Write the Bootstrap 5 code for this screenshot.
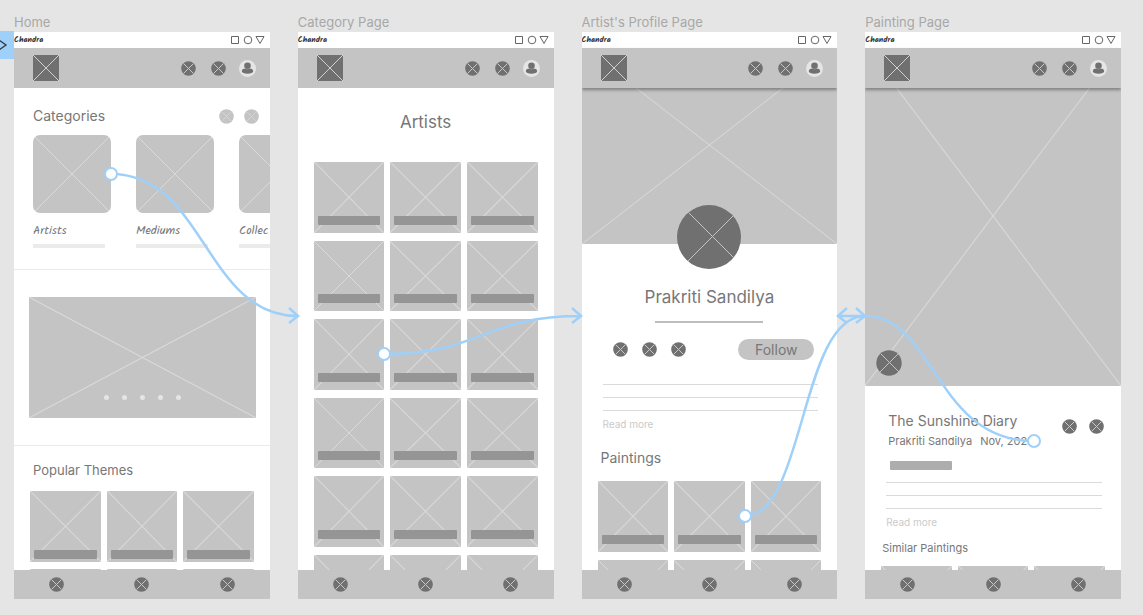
<!DOCTYPE html>
<html lang="en">
<head>
<meta charset="utf-8">
<meta name="viewport" content="width=device-width, initial-scale=1">
<title>Art app wireflow</title>
<link href="https://cdn.jsdelivr.net/npm/bootstrap@5.3.0/dist/css/bootstrap.min.css" rel="stylesheet">
<style>
  :root { --fill: #c4c4c4; --dark: #707070; --ink: #777; --flow: #9fd0f9; }
  body { background: #e5e5e5; color: var(--ink); font-family: Inter, "Liberation Sans", sans-serif; font-size: 14px; }
  .canvas { height: 100vh; padding: 13px 22px 16px 14px; display: grid; grid-template-columns: repeat(4, minmax(0, 1fr)); gap: 28px; overflow: hidden; }
  .frame-name { font-size: 13px; line-height: 18px; font-weight: 400; color: #a8a8a8; margin: 0 0 1px; }
  .hand { font-family: Kalam, "Open Sans", sans-serif; }
  .status { height: 16px; padding-right: 5px; color: #333; font-size: 8px; font-weight: 600; line-height: 16px; }
  .topbar { height: 40px; padding: 0 14px 0 19px; background: var(--fill); }
  .topbar.raised { box-shadow: 0 2px 3px rgba(0, 0, 0, .35); z-index: 1; }
  .alerts { margin: 0 13px 0 15px; }
  .bottombar { height: 29px; background: var(--fill); }
  .plain { border: 0; padding: 0; background: none; display: block; line-height: 0; }
  .ico { width: 15px; height: 15px; display: block; }
  .ph { background: var(--fill) url("data:image/svg+xml,%3Csvg xmlns='http://www.w3.org/2000/svg'%3E%3Cline x1='0' y1='0' x2='100%25' y2='100%25' stroke='%23dadada'/%3E%3Cline x1='100%25' y1='0' x2='0' y2='100%25' stroke='%23dadada'/%3E%3C/svg%3E") bottom / 100% 100% no-repeat; }
  /* the cover image continues behind the top bar */
  .cover { background-size: 100% calc(100% + 42px); }
  .h-lg { font-size: 17px; line-height: 24px; font-weight: 400; margin: 0; }
  .h-md { font-size: 14px; line-height: 20px; font-weight: 400; margin: 0; }
  .h-sm { font-size: 13px; line-height: 20px; font-weight: 400; margin: 0; }
  .text-s { font-size: 11px; line-height: 20px; }
  .more { font-size: 10px; line-height: 16px; color: #cacaca; text-decoration: none; display: block; margin: 5px 21px 0; }
  .cat { width: 78px; flex: none; }
  .cat-img { height: 78px; border-radius: 7px; }
  .cat-name { font-size: 12px; line-height: 18px; margin-top: 9px; white-space: nowrap; }
  .cat-bar { width: 72px; height: 4px; margin-top: 4px; background: #ebebeb; }
  .split { height: 1px; background: #ebebeb; }
  .banner { height: 121px; margin: 27px 14px 27px 15px; padding-bottom: 18px; gap: 13px; }
  .dot { width: 5px; height: 5px; border-radius: 50%; background: #e5e5e5; }
  .tiles { display: grid; grid-template-columns: repeat(3, 1fr); gap: 8px 6px; padding: 0 16px; }
  .tile { aspect-ratio: 1; padding: 0 4px 8px; display: flex; align-items: flex-end; }
  .tile::after { content: ""; flex: 1; height: 9px; border-radius: 1px; background: #959595; }
  .tiles.low { row-gap: 7px; }
  .tiles.low .tile { padding-bottom: 3px; }
  .avatar { width: 64px; height: 64px; margin-top: -39px; }
  .under { width: 108px; height: 2px; margin-top: 12px; background: #bdbdbd; }
  .actions { margin-top: 16px; padding: 0 23px 0 31px; }
  .follow { width: 76px; height: 21px; border: 0; border-radius: 11px; background: var(--fill); color: var(--ink); font-size: 14px; line-height: 21px; padding: 0; }
  .lines { display: grid; gap: 12px; margin: 24px 19px 0 21px; }
  .lines i { height: 1px; background: #dadada; }
  .tag { width: 62px; height: 9px; border-radius: 1px; background: #adadad; margin: 10px 0 0 25px; }
  .links { position: absolute; inset: 0; width: 100%; height: 100%; z-index: 5; pointer-events: none; fill: none; stroke: var(--flow); stroke-width: 2.5; }
  .starter { position: absolute; left: 0; top: 31px; width: 14px; height: 28px; background: var(--flow); z-index: 4; }
</style>
</head>
<body>
<svg class="d-none">
  <symbol id="x-dot" viewBox="0 0 15 15"><circle cx="7.5" cy="7.5" r="7.3" fill="#707070"/><path d="M2.5 2.5l10 10M12.5 2.5l-10 10" stroke="#c8c8c8"/></symbol>
  <symbol id="x-pale" viewBox="0 0 15 15"><circle cx="7.5" cy="7.5" r="7.3" fill="#c4c4c4"/><path d="M2.5 2.5l10 10M12.5 2.5l-10 10" stroke="#d4d4d4"/></symbol>
  <symbol id="x-box" viewBox="0 0 26 26"><rect width="26" height="26" rx="1" fill="#707070"/><path d="M0 0l26 26M26 0L0 26" stroke="#d0d0d0"/></symbol>
  <symbol id="user" viewBox="0 0 17 17"><circle cx="8.5" cy="8.5" r="8.5" fill="#e5e5e5"/><circle cx="8.5" cy="5.8" r="3.3" fill="#707070"/><path d="M2.8 11.3c0-2 2-2.7 3.5-2.7 1.4.9 3 .9 4.4 0 1.500 0 3.500.7 3.500 2.700 0 1.600-2.500 2.500-5.700 2.500s-5.700-.9-5.700-2.500z" fill="#707070"/></symbol>
  <symbol id="sys" viewBox="0 0 35 10"><g fill="none" stroke="#666"><path d="M1.5 1.5h7v7h-7zM26 1.5h8L30 8.5z"/><circle cx="18" cy="5" r="3.8"/></g></symbol>
</svg>

<main class="canvas position-relative">
  <section class="d-flex flex-column overflow-hidden" aria-label="Home">
    <h2 class="frame-name">Home</h2>
    <div class="bg-white flex-fill d-flex flex-column overflow-hidden">
      <div class="status d-flex align-items-center justify-content-between flex-shrink-0"><span class="hand">Chandra</span><svg width="35" height="10"><use href="#sys"/></svg></div>
      <header class="topbar d-flex align-items-center flex-shrink-0">
        <button class="plain me-auto" aria-label="Logo"><svg width="26" height="26"><use href="#x-box"/></svg></button>
        <button class="plain" aria-label="Search"><svg class="ico"><use href="#x-dot"/></svg></button>
        <button class="plain alerts" aria-label="Alerts"><svg class="ico"><use href="#x-dot"/></svg></button>
        <button class="plain" aria-label="Account"><svg width="17" height="17"><use href="#user"/></svg></button>
      </header>
      <div class="flex-fill overflow-hidden" style="min-height:0">
        <div class="d-flex align-items-center" style="padding:18px 11px 9px 19px;gap:10px">
          <h3 class="h-md me-auto">Categories</h3>
          <button class="plain" aria-label="Previous"><svg class="ico"><use href="#x-pale"/></svg></button>
          <button class="plain" aria-label="Next"><svg class="ico"><use href="#x-pale"/></svg></button>
        </div>
        <div class="d-flex overflow-hidden" style="padding:0 0 21px 19px;gap:25px">
          <div class="cat"><div class="cat-img ph"></div><div class="cat-name hand">Artists</div><div class="cat-bar"></div></div>
          <div class="cat"><div class="cat-img ph"></div><div class="cat-name hand">Mediums</div><div class="cat-bar"></div></div>
          <div class="cat"><div class="cat-img ph"></div><div class="cat-name hand">Collec</div><div class="cat-bar"></div></div>
        </div>
        <div class="split"></div>
        <div class="banner ph d-flex justify-content-center align-items-end"><i class="dot"></i><i class="dot"></i><i class="dot"></i><i class="dot"></i><i class="dot"></i></div>
        <div class="split"></div>
        <h3 class="h-sm" style="padding:14px 19px 11px">Popular Themes</h3>
        <div class="tiles low">
          <div class="tile ph"></div><div class="tile ph"></div><div class="tile ph"></div>
          <div class="tile ph"></div><div class="tile ph"></div><div class="tile ph"></div>
        </div>
      </div>
      <nav class="bottombar row g-0 align-items-center flex-shrink-0">
        <a href="#" class="col-4" aria-label="Home"><svg class="ico mx-auto"><use href="#x-dot"/></svg></a>
        <a href="#" class="col-4" aria-label="Explore"><svg class="ico mx-auto"><use href="#x-dot"/></svg></a>
        <a href="#" class="col-4" aria-label="Saved"><svg class="ico mx-auto"><use href="#x-dot"/></svg></a>
      </nav>
    </div>
  </section>

  <section class="d-flex flex-column overflow-hidden" aria-label="Category Page">
    <h2 class="frame-name">Category Page</h2>
    <div class="bg-white flex-fill d-flex flex-column overflow-hidden">
      <div class="status d-flex align-items-center justify-content-between flex-shrink-0"><span class="hand">Chandra</span><svg width="35" height="10"><use href="#sys"/></svg></div>
      <header class="topbar d-flex align-items-center flex-shrink-0">
        <button class="plain me-auto" aria-label="Logo"><svg width="26" height="26"><use href="#x-box"/></svg></button>
        <button class="plain" aria-label="Search"><svg class="ico"><use href="#x-dot"/></svg></button>
        <button class="plain alerts" aria-label="Alerts"><svg class="ico"><use href="#x-dot"/></svg></button>
        <button class="plain" aria-label="Account"><svg width="17" height="17"><use href="#user"/></svg></button>
      </header>
      <div class="flex-fill overflow-hidden" style="min-height:0">
        <h3 class="h-lg text-center" style="padding:22px 0 28px">Artists</h3>
        <div class="tiles">
          <div class="tile ph"></div><div class="tile ph"></div><div class="tile ph"></div>
          <div class="tile ph"></div><div class="tile ph"></div><div class="tile ph"></div>
          <div class="tile ph"></div><div class="tile ph"></div><div class="tile ph"></div>
          <div class="tile ph"></div><div class="tile ph"></div><div class="tile ph"></div>
          <div class="tile ph"></div><div class="tile ph"></div><div class="tile ph"></div>
          <div class="tile ph"></div><div class="tile ph"></div><div class="tile ph"></div>
        </div>
      </div>
      <nav class="bottombar row g-0 align-items-center flex-shrink-0">
        <a href="#" class="col-4" aria-label="Home"><svg class="ico mx-auto"><use href="#x-dot"/></svg></a>
        <a href="#" class="col-4" aria-label="Explore"><svg class="ico mx-auto"><use href="#x-dot"/></svg></a>
        <a href="#" class="col-4" aria-label="Saved"><svg class="ico mx-auto"><use href="#x-dot"/></svg></a>
      </nav>
    </div>
  </section>

  <section class="d-flex flex-column overflow-hidden" aria-label="Artist's Profile Page">
    <h2 class="frame-name">Artist's Profile Page</h2>
    <div class="bg-white flex-fill d-flex flex-column overflow-hidden">
      <div class="status d-flex align-items-center justify-content-between flex-shrink-0"><span class="hand">Chandra</span><svg width="35" height="10"><use href="#sys"/></svg></div>
      <header class="topbar raised d-flex align-items-center flex-shrink-0">
        <button class="plain me-auto" aria-label="Logo"><svg width="26" height="26"><use href="#x-box"/></svg></button>
        <button class="plain" aria-label="Search"><svg class="ico"><use href="#x-dot"/></svg></button>
        <button class="plain alerts" aria-label="Alerts"><svg class="ico"><use href="#x-dot"/></svg></button>
        <button class="plain" aria-label="Account"><svg width="17" height="17"><use href="#user"/></svg></button>
      </header>
      <div class="flex-fill overflow-hidden" style="min-height:0">
        <div class="ph cover" style="height:156px"></div>
        <svg class="avatar d-block mx-auto" viewBox="0 0 64 64"><circle cx="32" cy="32" r="32" fill="#707070"/><path d="M12 8l45 45M56 11L11 56" stroke="#c4c4c4"/></svg>
        <h3 class="h-lg text-center mt-3">Prakriti Sandilya</h3>
        <div class="under mx-auto"></div>
        <div class="actions d-flex align-items-center" style="gap:14px">
          <button class="plain" aria-label="Message"><svg class="ico"><use href="#x-dot"/></svg></button>
          <button class="plain" aria-label="Share"><svg class="ico"><use href="#x-dot"/></svg></button>
          <button class="plain" aria-label="Save"><svg class="ico"><use href="#x-dot"/></svg></button>
          <button class="follow ms-auto">Follow</button>
        </div>
        <div class="lines"><i></i><i></i><i></i></div>
        <a href="#" class="more">Read more</a>
        <h3 class="h-md" style="padding:16px 19px 13px">Paintings</h3>
        <div class="tiles">
          <div class="tile ph"></div><div class="tile ph"></div><div class="tile ph"></div>
          <div class="tile ph"></div><div class="tile ph"></div><div class="tile ph"></div>
        </div>
      </div>
      <nav class="bottombar row g-0 align-items-center flex-shrink-0">
        <a href="#" class="col-4" aria-label="Home"><svg class="ico mx-auto"><use href="#x-dot"/></svg></a>
        <a href="#" class="col-4" aria-label="Explore"><svg class="ico mx-auto"><use href="#x-dot"/></svg></a>
        <a href="#" class="col-4" aria-label="Saved"><svg class="ico mx-auto"><use href="#x-dot"/></svg></a>
      </nav>
    </div>
  </section>

  <section class="d-flex flex-column overflow-hidden" aria-label="Painting Page">
    <h2 class="frame-name">Painting Page</h2>
    <div class="bg-white flex-fill d-flex flex-column overflow-hidden">
      <div class="status d-flex align-items-center justify-content-between flex-shrink-0"><span class="hand">Chandra</span><svg width="35" height="10"><use href="#sys"/></svg></div>
      <header class="topbar raised d-flex align-items-center flex-shrink-0">
        <button class="plain me-auto" aria-label="Logo"><svg width="26" height="26"><use href="#x-box"/></svg></button>
        <button class="plain" aria-label="Search"><svg class="ico"><use href="#x-dot"/></svg></button>
        <button class="plain alerts" aria-label="Alerts"><svg class="ico"><use href="#x-dot"/></svg></button>
        <button class="plain" aria-label="Account"><svg width="17" height="17"><use href="#user"/></svg></button>
      </header>
      <div class="flex-fill overflow-hidden" style="min-height:0">
        <div class="ph cover d-flex align-items-end" style="height:298px;padding:10px 11px"><svg width="26" height="26" viewBox="0 0 26 26"><circle cx="13" cy="13" r="12.7" fill="#707070"/><path d="M5 4l18 18M22 4L4 22" stroke="#c4c4c4"/></svg></div>
        <div class="d-flex" style="padding:25px 17px 0 23px">
          <div class="me-auto text-nowrap">
            <h3 class="h-md">The Sunshine Diary</h3>
            <div class="text-s d-flex" style="gap:8px"><span>Prakriti Sandilya</span><span>Nov, 2023</span></div>
          </div>
          <div class="d-flex pt-2" style="gap:12px">
            <button class="plain align-self-start" aria-label="Like"><svg class="ico"><use href="#x-dot"/></svg></button>
            <button class="plain align-self-start" aria-label="Share"><svg class="ico"><use href="#x-dot"/></svg></button>
          </div>
        </div>
        <div class="tag"></div>
        <div class="lines" style="margin-top:12px"><i></i><i></i><i></i></div>
        <a href="#" class="more">Read more</a>
        <h3 class="text-s fw-normal mb-0" style="padding:8px 17px">Similar Paintings</h3>
        <div class="tiles">
          <div class="tile ph"></div><div class="tile ph"></div><div class="tile ph"></div>
        </div>
      </div>
      <nav class="bottombar row g-0 align-items-center flex-shrink-0">
        <a href="#" class="col-4" aria-label="Home"><svg class="ico mx-auto"><use href="#x-dot"/></svg></a>
        <a href="#" class="col-4" aria-label="Explore"><svg class="ico mx-auto"><use href="#x-dot"/></svg></a>
        <a href="#" class="col-4" aria-label="Saved"><svg class="ico mx-auto"><use href="#x-dot"/></svg></a>
      </nav>
    </div>
  </section>

  <div class="starter"><svg width="14" height="28" class="d-block"><path d="M-1 9l7 5-7 5" fill="none" stroke="#333" stroke-width="1.3"/></svg></div>

  <!-- prototype connections between frames -->
  <svg class="links" viewBox="0 0 1143 615" preserveAspectRatio="none">
    <path d="M111 174C205 174 205 316 298 316M289 308l9 8-9 7"/>
    <path d="M384 354C483 354 483 316 581 316M572 308l9 8-9 7"/>
    <path d="M745 516C805 516 800 316 865 316M856 308l9 8-9 7"/>
    <path d="M1034 441C935 441 935 316 865 316H838M847 308l-9 8 9 7"/>
    <g fill="#fff" stroke-width="2"><circle cx="111" cy="174" r="6"/><circle cx="384" cy="354" r="6"/><circle cx="745" cy="516" r="6"/><circle cx="1034" cy="441" r="6"/></g>
  </svg>
</main>
<script src="https://cdn.jsdelivr.net/npm/bootstrap@5.3.0/dist/js/bootstrap.bundle.min.js"></script>
</body>
</html>
